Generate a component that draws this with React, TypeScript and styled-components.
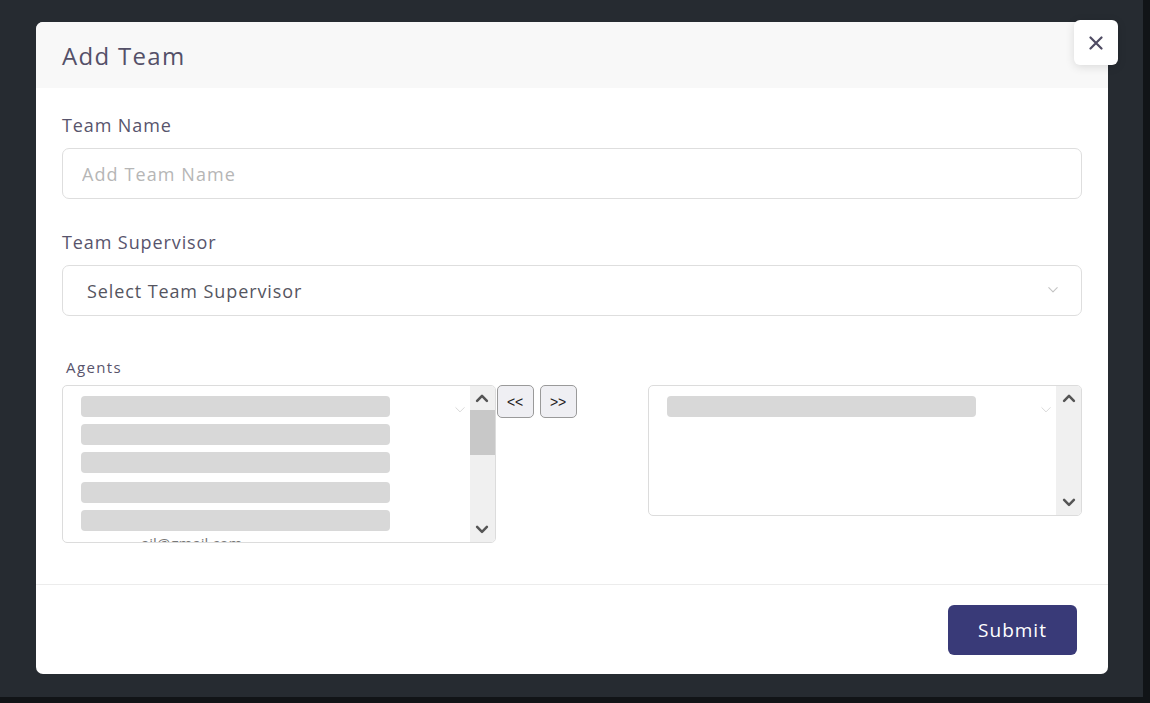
import React from "react";
import styled, { createGlobalStyle } from "styled-components";

const GlobalStyle = createGlobalStyle`
  html, body {
    margin: 0;
    padding: 0;
    background: #111417;
  }
  body {
    font-family: "Open Sans", "Liberation Sans", sans-serif;
  }
`;

const Screen = styled.div`
  width: 1143px;
  height: 697px;
  background: #262b31;
  overflow: hidden;
  padding-top: 22px;
  padding-left: 36px;
  box-sizing: border-box;
`;

const Modal = styled.div`
  position: relative;
  width: 1072px;
  height: 652px;
  background: #ffffff;
  border-radius: 7px;
  display: flex;
  flex-direction: column;
`;

const Header = styled.div`
  height: 66px;
  background: #f8f8f8;
  border-radius: 7px 7px 0 0;
  display: flex;
  align-items: center;
  padding-left: 26px;
`;

const Title = styled.h2`
  margin: 0;
  font-size: 24px;
  font-weight: 500;
  color: #545068;
  letter-spacing: 1.3px;
`;

const CloseButton = styled.button`
  position: absolute;
  top: -2px;
  right: -10px;
  width: 44px;
  height: 45px;
  border: none;
  border-radius: 6px;
  background: #ffffff;
  box-shadow: 0 2px 10px rgba(0, 0, 0, 0.12);
  display: flex;
  align-items: center;
  justify-content: center;
  padding: 0;
  cursor: pointer;
`;

const Body = styled.div`
  flex: 1;
  padding: 25px 26px 0 26px;
  display: flex;
  flex-direction: column;
`;

const Label = styled.label<{ $small?: boolean }>`
  display: block;
  font-size: ${(p) => (p.$small ? "15px" : "18px")};
  color: #58546c;
  letter-spacing: ${(p) => (p.$small ? "1.4px" : "0.9px")};
  margin: ${(p) => (p.$small ? "0 0 8px 4px" : "0 0 11px 0")};
`;

const Field = styled.div<{ $gap: number }>`
  margin-bottom: ${(p) => p.$gap}px;
`;

const TextInput = styled.input`
  width: 100%;
  height: 51px;
  box-sizing: border-box;
  border: 1px solid #dedede;
  border-radius: 7px;
  padding: 0 19px;
  font-family: inherit;
  font-size: 18px;
  letter-spacing: 1.1px;
  color: #333;
  outline: none;
  &::placeholder {
    color: #b6b6b6;
  }
`;

const SelectBox = styled.div`
  height: 51px;
  box-sizing: border-box;
  border: 1px solid #dedede;
  border-radius: 7px;
  padding: 0 22px 0 24px;
  display: flex;
  align-items: center;
  justify-content: space-between;
  font-size: 18px;
  letter-spacing: 0.9px;
  color: #55555f;
`;

const AgentsRow = styled.div`
  display: flex;
  align-items: flex-start;
`;

const ListBox = styled.div<{ $width: number; $height: number }>`
  width: ${(p) => p.$width}px;
  height: ${(p) => p.$height}px;
  box-sizing: border-box;
  border: 1px solid #dcdcdc;
  border-radius: 5px;
  display: flex;
  overflow: hidden;
`;

const ListItems = styled.div`
  flex: 1;
  position: relative;
  padding: 10px 0 0 18px;
  display: flex;
  flex-direction: column;
  gap: 7px;
  overflow: hidden;
`;

const Redacted = styled.div<{ $shift?: number }>`
  width: 309px;
  height: 21px;
  border-radius: 4px;
  background: #d8d8d8;
  flex-shrink: 0;
  margin-top: ${(p) => p.$shift ?? 0}px;
`;

const ClippedText = styled.div`
  font-size: 15px;
  line-height: 15px;
  color: #777;
  margin: -2px 0 0 60px;
  flex-shrink: 0;
`;

const FaintChevron = styled.span`
  position: absolute;
  right: 4px;
  top: 20px;
  line-height: 0;
`;

const ScrollBar = styled.div`
  width: 25px;
  background: #f0f0f0;
  display: flex;
  flex-direction: column;
  align-items: stretch;
`;

const ScrollArrow = styled.div`
  height: 24px;
  display: flex;
  align-items: center;
  justify-content: center;
`;

const ScrollTrack = styled.div`
  flex: 1;
`;

const Thumb = styled.div`
  height: 45px;
  background: #c8c8c8;
`;

const MoveButtons = styled.div`
  display: flex;
  gap: 6px;
  margin-left: 1px;
  width: 152px;
`;

const MoveButton = styled.button`
  width: 37px;
  height: 33px;
  box-sizing: border-box;
  border: 1px solid #9a9a9a;
  border-radius: 5px;
  background: #efeff3;
  font-family: "Liberation Sans", Arial, sans-serif;
  font-size: 14px;
  color: #222;
  padding: 0;
`;

const Footer = styled.div`
  border-top: 1px solid #ececec;
  height: 90px;
  box-sizing: border-box;
  display: flex;
  align-items: center;
  justify-content: flex-end;
  padding: 0 31px 0 0;
`;

const SubmitButton = styled.button`
  width: 129px;
  height: 50px;
  border: none;
  border-radius: 6px;
  background: #393a78;
  color: #ffffff;
  font-family: inherit;
  font-size: 19px;
  letter-spacing: 1px;
  margin-top: 1px;
`;

const Chevron = ({ up, color = "#555", size = 14, weight = 2.6 }: { up?: boolean; color?: string; size?: number; weight?: number }) => (
  <svg width={size} height={size * 0.7} viewBox="0 0 14 10">
    <polyline
      points={up ? "2,8 7,3 12,8" : "2,2 7,7 12,2"}
      fill="none"
      stroke={color}
      strokeWidth={weight}
      strokeLinecap="round"
      strokeLinejoin="round"
    />
  </svg>
);

const Scroller = ({ thumb }: { thumb?: boolean }) => (
  <ScrollBar>
    <ScrollArrow>
      <Chevron up />
    </ScrollArrow>
    <ScrollTrack>{thumb && <Thumb />}</ScrollTrack>
    <ScrollArrow>
      <Chevron />
    </ScrollArrow>
  </ScrollBar>
);

export default function App() {
  return (
    <>
      <GlobalStyle />
      <Screen>
        <Modal>
          <Header>
            <Title>Add Team</Title>
          </Header>
          <CloseButton aria-label="close">
            <svg width="14" height="14" viewBox="0 0 14 14">
              <path d="M1.5 1.5 L12.5 12.5 M12.5 1.5 L1.5 12.5" stroke="#4f4b63" strokeWidth="2.2" strokeLinecap="round" />
            </svg>
          </CloseButton>
          <Body>
            <Field $gap={31}>
              <Label>Team Name</Label>
              <TextInput placeholder="Add Team Name" />
            </Field>
            <Field $gap={41}>
              <Label>Team Supervisor</Label>
              <SelectBox>
                Select Team Supervisor
                <Chevron color="#c4c4c4" size={12} weight={1.3} />
              </SelectBox>
            </Field>
            <Label $small>Agents</Label>
            <AgentsRow>
              <ListBox $width={434} $height={158}>
                <ListItems>
                  <Redacted />
                  <Redacted />
                  <Redacted />
                  <Redacted $shift={2} />
                  <Redacted />
                  <ClippedText>ail@gmail.com</ClippedText>
                  <FaintChevron>
                    <Chevron color="#d0d0d0" size={12} weight={1} />
                  </FaintChevron>
                </ListItems>
                <Scroller thumb />
              </ListBox>
              <MoveButtons>
                <MoveButton>&lt;&lt;</MoveButton>
                <MoveButton>&gt;&gt;</MoveButton>
              </MoveButtons>
              <ListBox $width={434} $height={131}>
                <ListItems>
                  <Redacted />
                  <FaintChevron>
                    <Chevron color="#d0d0d0" size={12} weight={1} />
                  </FaintChevron>
                </ListItems>
                <Scroller />
              </ListBox>
            </AgentsRow>
          </Body>
          <Footer>
            <SubmitButton>Submit</SubmitButton>
          </Footer>
        </Modal>
      </Screen>
    </>
  );
}
